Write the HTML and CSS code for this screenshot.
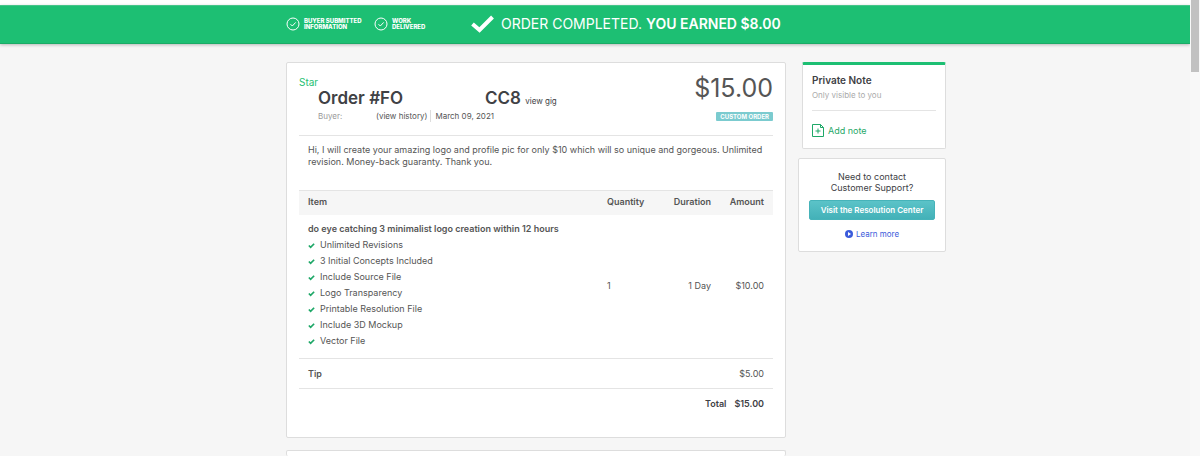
FILE: index.html
```
<!DOCTYPE html>
<html lang="en">
<head>
    <meta charset="UTF-8">
    <title>Order details</title>
    <link rel="stylesheet" href="styles.css">
</head>
<body>
    <div class="page">
        <header class="status-bar">
            <div class="step step-info">
                <svg class="step-icon" viewBox="0 0 14 14"><circle cx="7" cy="7" r="6"/><path d="M4.5 7.2l1.8 1.8 3.4-3.6"/></svg>
                <span>BUYER SUBMITTED<br>INFORMATION</span>
            </div>
            <div class="step step-work">
                <svg class="step-icon" viewBox="0 0 14 14"><circle cx="7" cy="7" r="6"/><path d="M4.5 7.2l1.8 1.8 3.4-3.6"/></svg>
                <span>WORK<br>DELIVERED</span>
            </div>
            <div class="status">
                <svg class="status-icon" viewBox="0 0 24 20"><path d="M2 10l7 6L22 3"/></svg>
                <span>ORDER COMPLETED. <b>YOU EARNED $8.00</b></span>
            </div>
        </header>

        <div class="content">
            <main class="main">
                <section class="card order">
                    <div class="order-header">
                        <div>
                            <a class="star" href="#">Star</a>
                            <div class="order-info">
                                <h1><span class="order-id">Order #FO</span>CC8 <a href="#">view gig</a></h1>
                                <p><span class="buyer">Buyer:</span><a class="history" href="#">(view history)</a><span class="date">March 09, 2021</span></p>
                            </div>
                        </div>
                        <div class="price">
                            <span class="price-value">$15.00</span>
                            <span class="tag">CUSTOM ORDER</span>
                        </div>
                    </div>

                    <p class="message">Hi, I will create your amazing logo and profile pic for only $10 which will so unique and gorgeous. Unlimited revision. Money-back guaranty. Thank you.</p>

                    <table class="items">
                        <thead>
                            <tr>
                                <th>Item</th>
                                <th class="quantity">Quantity</th>
                                <th class="duration">Duration</th>
                                <th class="amount">Amount</th>
                            </tr>
                        </thead>
                        <tbody>
                            <tr class="item-row">
                                <td>
                                    <b>do eye catching 3 minimalist logo creation within 12 hours</b>
                                    <ul>
                                        <li><svg viewBox="0 0 8 8"><path d="M1 4l2 2 4-4"/></svg>Unlimited Revisions</li>
                                        <li><svg viewBox="0 0 8 8"><path d="M1 4l2 2 4-4"/></svg>3 Initial Concepts Included</li>
                                        <li><svg viewBox="0 0 8 8"><path d="M1 4l2 2 4-4"/></svg>Include Source File</li>
                                        <li><svg viewBox="0 0 8 8"><path d="M1 4l2 2 4-4"/></svg>Logo Transparency</li>
                                        <li><svg viewBox="0 0 8 8"><path d="M1 4l2 2 4-4"/></svg>Printable Resolution File</li>
                                        <li><svg viewBox="0 0 8 8"><path d="M1 4l2 2 4-4"/></svg>Include 3D Mockup</li>
                                        <li><svg viewBox="0 0 8 8"><path d="M1 4l2 2 4-4"/></svg>Vector File</li>
                                    </ul>
                                </td>
                                <td class="quantity">1</td>
                                <td class="duration">1 Day</td>
                                <td class="amount">$10.00</td>
                            </tr>
                            <tr class="tip-row">
                                <th colspan="3">Tip</th>
                                <td class="amount">$5.00</td>
                            </tr>
                        </tbody>
                        <tfoot>
                            <tr>
                                <td colspan="4"><span class="total-label">Total</span><span>$15.00</span></td>
                            </tr>
                        </tfoot>
                    </table>
                </section>
                <section class="card next"></section>
            </main>

            <aside class="sidebar">
                <section class="card note">
                    <h2>Private Note</h2>
                    <p>Only visible to you</p>
                    <a class="add-note" href="#">
                        <svg viewBox="0 0 12 13"><path d="M.5.5h8l3 3v9H.5z"/><path d="M8.500.5v3h3M3.500 7h5M6 4.500v5"/></svg>
                        <span>Add note</span>
                    </a>
                </section>
                <section class="card support">
                    <p>Need to contact<br>Customer Support?</p>
                    <button type="button">Visit the Resolution Center</button>
                    <a class="learn" href="#">
                        <svg viewBox="0 0 8 8"><circle cx="4" cy="4" r="4" fill="#3b5bdb"/><path d="M3 2l3 2-3 2z" fill="#fff"/></svg>
                        Learn more
                    </a>
                </section>
            </aside>
        </div>
    </div>
    <div class="scroll-track"><div class="scroll-thumb"></div></div>
</body>
</html>
```
FILE: styles.css
```
* {
    box-sizing: border-box;
}

body {
    margin: 0;
    height: 100vh;
    display: flex;
    background: #f6f6f6;
    color: #555;
    font-family: Inter, "Liberation Sans", sans-serif;
    font-size: 9px;
    line-height: 12px;
}

h1, h2, p, ul {
    margin: 0;
    padding: 0;
}

a {
    color: inherit;
    text-decoration: none;
}

svg {
    flex: none;
    fill: none;
}

.page {
    flex: 1;
    display: flex;
    flex-direction: column;
    border-top: 5px solid #fff;
}

/* Green status bar */
.status-bar {
    display: flex;
    align-items: center;
    height: 39px;
    padding: 0 0 2px 286px;
    background: #1dbf73;
    border-top: 1px solid #45c489;
    border-bottom: 1px solid #1bab66;
    box-shadow: 0 1px 3px rgba(0, 0, 0, 0.25);
    color: #fff;
}

.step {
    display: flex;
    align-items: center;
    gap: 4px;
    font-size: 6px;
    font-weight: 800;
    line-height: 6px;
}

.step-info {
    width: 88px;
}

.step-work {
    width: 96px;
}

.step-icon {
    width: 14px;
    height: 14px;
    stroke: #fff;
}

.status {
    display: flex;
    align-items: center;
    gap: 6px;
    font-size: 14px;
    line-height: 20px;
}

.status b {
    font-weight: 600;
}

.status-icon {
    width: 25px;
    height: 20px;
    stroke: #fff;
    stroke-width: 4;
}

.content {
    flex: 1;
    display: flex;
    gap: 12px;
    padding: 18px 244px 0 286px;
}

.main {
    flex: 1;
    display: flex;
    flex-direction: column;
}

.card {
    background: #fff;
    border: 1px solid #ddd;
    border-radius: 2px;
}

.order {
    padding: 12px 12px 18px;
}

/* Top of the next card, cut by the window */
.next {
    flex: 1;
    margin-top: 12px;
    border-bottom: 0;
}

.order-header {
    display: flex;
    justify-content: space-between;
    height: 61px;
    border-bottom: 1px solid #e4e4e4;
}

.star {
    display: block;
    color: #1dbf73;
    font-size: 10px;
    line-height: 14px;
}

.order-info {
    padding-left: 19px;
}

h1 {
    color: #404145;
    font-size: 17px;
    font-weight: 600;
    line-height: 18px;
}

h1 a {
    font-size: 8px;
    font-weight: 400;
}

.order-id {
    display: inline-block;
    width: 167px;
}

.order-info p {
    display: flex;
    font-size: 8px;
}

.buyer {
    width: 58px;
    color: #999;
}

.date {
    margin-left: 3px;
    padding-left: 4px;
    border-left: 1px solid #ddd;
}

.price {
    display: flex;
    flex-direction: column;
    align-items: flex-end;
    gap: 11px;
}

.price-value {
    font-size: 25px;
    line-height: 26px;
}

.tag {
    padding: 0 4px;
    border-radius: 1px;
    background: #7bcbcf;
    color: #fff;
    font-size: 6px;
    font-weight: 700;
    line-height: 9px;
}

.message {
    padding: 8px 9px 22px;
}

/* Order items */
.items {
    width: 100%;
    border-collapse: collapse;
}

.items th,
.items td {
    padding: 0 9px;
    text-align: left;
    font-weight: 400;
}

.items thead th {
    height: 24px;
    padding-bottom: 1px;
    border-top: 1px solid #e4e4e4;
    background: #f6f6f6;
    font-weight: 600;
}

.items b {
    font-weight: 600;
}

.items ul {
    margin-top: 2px;
    list-style: none;
}

.items li {
    display: flex;
    align-items: center;
    gap: 5px;
    line-height: 16px;
}

.items li svg {
    width: 7px;
    height: 7px;
    stroke: #1fa868;
    stroke-width: 2;
}

.items .item-row td {
    height: 144px;
}

.items .quantity {
    width: 56px;
}

.items .duration {
    width: 66px;
    text-align: right;
}

.items .amount {
    width: 53px;
    padding-left: 0;
    text-align: right;
}

.items tbody tr {
    height: 30px;
    border-bottom: 1px solid #e4e4e4;
}

.items .tip-row th {
    font-weight: 600;
}

.items tfoot tr {
    height: 30px;
    color: #404145;
}

.items tfoot td {
    font-weight: 600;
    text-align: right;
}

.total-label {
    margin-right: 8px;
}

/* Sidebar */
.sidebar {
    width: 148px;
}

.note {
    margin-left: 4px;
    padding: 8px 9px 11px;
    border-top: 3px solid #1dbf73;
}

.note h2 {
    color: #404145;
    font-size: 10px;
    font-weight: 600;
    line-height: 14px;
}

.note p {
    margin-top: 2px;
    padding-bottom: 9px;
    border-bottom: 1px solid #e4e4e4;
    color: #aaa;
    font-size: 8px;
}

.add-note {
    display: flex;
    align-items: center;
    gap: 4px;
    margin-top: 13px;
    color: #1fa868;
}

.add-note svg {
    width: 12px;
    height: 13px;
    stroke: #1fa868;
}

.support {
    display: flex;
    flex-direction: column;
    align-items: center;
    margin-top: 9px;
    padding: 12px 10px 11px;
}

.support p {
    color: #404145;
    line-height: 11px;
    text-align: center;
}

.support button {
    width: 100%;
    height: 20px;
    margin-top: 7px;
    padding: 0;
    border: 1px solid #46b3b9;
    border-radius: 2px;
    background: linear-gradient(#5bc3c8, #43b1b8);
    color: #fff;
    font-family: inherit;
    font-size: 8px;
    font-weight: 600;
}

.learn {
    display: flex;
    align-items: center;
    gap: 3px;
    margin-top: 8px;
    color: #3b5bdb;
    font-size: 8px;
}

.learn svg {
    width: 8px;
    height: 8px;
}

.scroll-track {
    width: 10px;
    padding-left: 1px;
    background: #f8f8f8;
}

.scroll-thumb {
    width: 8px;
    height: 72px;
    background: #c1c1c1;
}
```
